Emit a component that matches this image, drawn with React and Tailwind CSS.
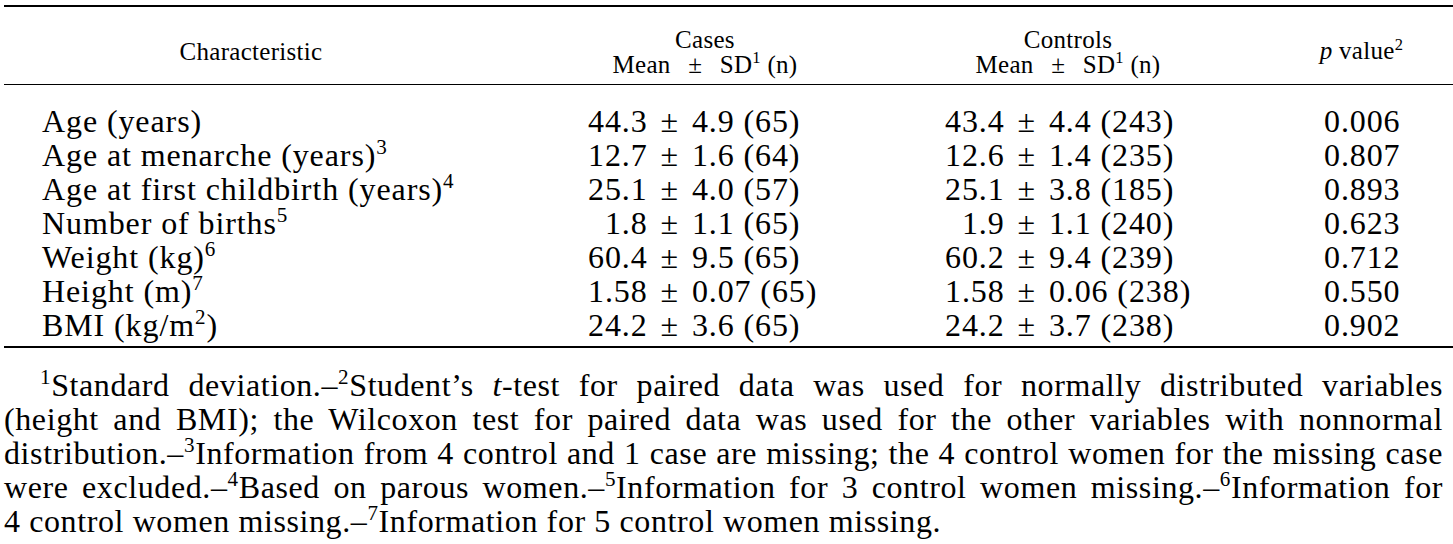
import React from "react";

const rows = [
    { label: "Age (years)", sup: null, cases: ["44.3", "4.9 (65)"], controls: ["43.4", "4.4 (243)"], p: "0.006" },
    { label: "Age at menarche (years)", sup: "3", cases: ["12.7", "1.6 (64)"], controls: ["12.6", "1.4 (235)"], p: "0.807" },
    { label: "Age at first childbirth (years)", sup: "4", cases: ["25.1", "4.0 (57)"], controls: ["25.1", "3.8 (185)"], p: "0.893" },
    { label: "Number of births", sup: "5", cases: ["1.8", "1.1 (65)"], controls: ["1.9", "1.1 (240)"], p: "0.623", pad: true },
    { label: "Weight (kg)", sup: "6", cases: ["60.4", "9.5 (65)"], controls: ["60.2", "9.4 (239)"], p: "0.712" },
    { label: "Height (m)", sup: "7", cases: ["1.58", "0.07 (65)"], controls: ["1.58", "0.06 (238)"], p: "0.550" },
    { label: "BMI (kg/m", sup: "2", tail: ")", cases: ["24.2", "3.6 (65)"], controls: ["24.2", "3.7 (238)"], p: "0.902" },
];

// superscript that doesn't push the line box taller
function Sup({ children }) {
    return <span className="relative -top-[0.55em] align-baseline text-[0.66em] leading-none">{children}</span>;
}

const footLines = [
    <><Sup>1</Sup>Standard deviation.–<Sup>2</Sup>Student’s <i>t</i>-test for paired data was used for normally distributed variables</>,
    <>(height and BMI); the Wilcoxon test for paired data was used for the other variables with nonnormal</>,
    <>distribution.–<Sup>3</Sup>Information from 4 control and 1 case are missing; the 4 control women for the missing case</>,
    <>were excluded.–<Sup>4</Sup>Based on parous women.–<Sup>5</Sup>Information for 3 control women missing.–<Sup>6</Sup>Information for</>,
    <>4 control women missing.–<Sup>7</Sup>Information for 5 control women missing.</>,
];

const Value = ({ parts, pad }) => (
    <span>
        {pad && <span className="invisible">0</span>}
        {parts[0]}<span className="px-[4px]"> ± </span>{parts[1]}
    </span>
);

const cols = "grid grid-cols-[494px_414px_312px_1fr]";

const App = () => {
    return (
        <div className="w-[1453px] h-[544px] bg-white text-black overflow-hidden font-['Liberation_Serif','Times_New_Roman',serif]">
            <div className="ml-[4px] mt-[5px]">
                {/* header */}
                <div className="border-t-2 border-black" />
                <div className={`${cols} h-[77px] pt-[12px] items-center text-[25px] leading-[25px] tracking-[0.3px] text-center`}>
                    <div>Characteristic</div>
                    <div>
                        Cases<br />Mean<span className="px-[11px]"> ± </span>SD<Sup>1</Sup> (n)
                    </div>
                    <div>
                        Controls<br />Mean<span className="px-[11px]"> ± </span>SD<Sup>1</Sup> (n)
                    </div>
                    <div className="pl-[46px] pb-[2px]">
                        <i>p</i> value<Sup>2</Sup>
                    </div>
                </div>
                <div className="border-t border-black" />

                {/* body */}
                <div className="pt-[19px] pb-[4px] text-[32px] leading-[34px] tracking-[0.9px]">
                    {rows.map((r) => (
                        <div key={r.label} className={cols}>
                            <div className="pl-[38px] whitespace-nowrap">
                                {r.label}{r.sup && <Sup>{r.sup}</Sup>}{r.tail}
                            </div>
                            <div className="pl-[90px] whitespace-nowrap"><Value parts={r.cases} pad={r.pad} /></div>
                            <div className="pl-[33px] whitespace-nowrap"><Value parts={r.controls} pad={r.pad} /></div>
                            <div className="pl-[100px] whitespace-nowrap">{r.p}</div>
                        </div>
                    ))}
                </div>
                <div className="border-t-2 border-black" />

                {/* footnotes */}
                <div className="pt-[20px] mr-[10px] text-[32px] leading-[34px] tracking-[0.6px]">
                    {footLines.map((line, i) => (
                        <div
                            key={i}
                            className={`whitespace-nowrap ${i === 0 ? "pl-[36px]" : ""} ${i < footLines.length - 1 ? "text-justify [text-align-last:justify]" : ""}`}
                        >
                            {line}
                        </div>
                    ))}
                </div>
            </div>
        </div>
    );
};

export default App;
